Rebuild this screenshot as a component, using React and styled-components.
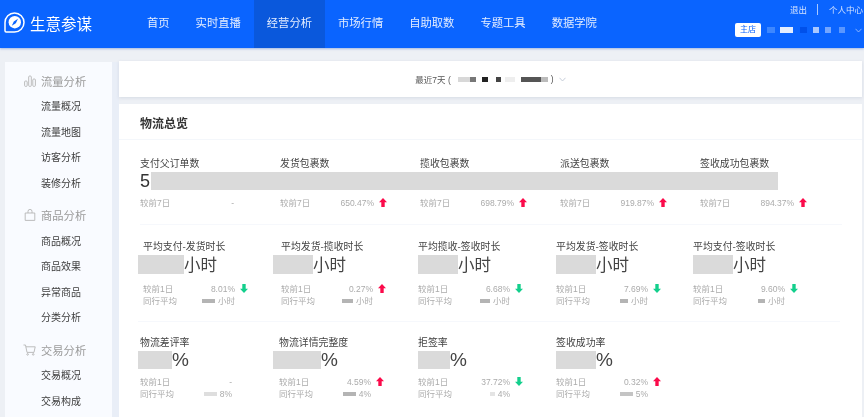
import React from "react";
import styled, { createGlobalStyle } from "styled-components";

const GlobalStyle = createGlobalStyle`
  html, body {
    margin: 0;
    padding: 0;
    height: 100%;
    overflow: hidden;
    background: #edf0f5;
    font-family: "Liberation Sans", "Noto Sans CJK SC", sans-serif;
  }
`;

const Page = styled.div`
  width: 864px;
  height: 417px;
  overflow: hidden;
  filter: blur(0.3px);
`;

const Header = styled.header`
  height: 48px;
  background: #0a64ff;
  display: flex;
  box-shadow: 0 1px 2px rgba(90, 130, 210, 0.5);
`;

const Brand = styled.div`
  width: 134px;
  display: flex;
  align-items: center;
  padding: 0 0 3px 4px;
  gap: 5px;
  box-sizing: border-box;
  color: #fff;
  font-size: 15.5px;
`;

const Nav = styled.nav`
  display: flex;
`;

const NavItem = styled.div`
  padding: 0 13px;
  line-height: 46px;
  font-size: 11.3px;
  color: #e4edff;
  background: ${(p) => (p.$active ? "#0a58dc" : "transparent")};
`;

const Account = styled.div`
  margin-left: auto;
  width: 129px;
  flex-shrink: 0;
  font-size: 8.5px;
  color: #d5e3ff;
`;

const AccountTop = styled.div`
  display: flex;
  align-items: center;
  height: 18px;
  padding-left: 55px;
  white-space: nowrap;
`;

const AccountSep = styled.span`
  width: 1px;
  height: 11px;
  background: #a9c8ff;
  margin: 0 11px 0 10px;
`;

const AccountBottom = styled.div`
  display: flex;
  align-items: center;
  height: 20px;
  margin-top: 2px;
`;

const ShopTag = styled.span`
  width: 26px;
  height: 14px;
  line-height: 14px;
  text-align: center;
  background: #fff;
  border-radius: 2px;
  color: #0a64ff;
  font-size: 8px;
  margin-right: 6px;
`;

const Smudge = styled.span`
  display: inline-block;
  flex-shrink: 0;
  width: ${(p) => p.$w}px;
  height: ${(p) => p.$h || 6}px;
  margin-left: ${(p) => p.$gap || 0}px;
  background: ${(p) => p.$color};
  filter: blur(0.7px);
`;

const Body = styled.div`
  display: flex;
  align-items: flex-start;
  padding: 14px 2px 0 5px;
`;

const Sidebar = styled.aside`
  width: 107px;
  height: 360px;
  flex-shrink: 0;
  box-sizing: border-box;
  padding-top: 5px;
  background: #f9fbff;
  box-shadow: 7px 0 0 #e9eef7;
`;

const SideGroup = styled.div`
  margin-bottom: 5.5px;
`;

const SideTitle = styled.div`
  height: 27px;
  display: flex;
  align-items: center;
  gap: 5px;
  padding-left: 19px;
  font-size: 11.3px;
  color: #9b9b9b;
`;

const SideItem = styled.div`
  height: 25.5px;
  line-height: 25.5px;
  padding-left: 36px;
  font-size: 10px;
  color: #3c3c3c;
`;

const Main = styled.main`
  margin-left: 7px;
  flex: 1;
  min-width: 0;
`;

const DateBar = styled.div`
  height: 36px;
  margin-top: -1px;
  background: #fff;
  box-shadow: 0 1px 3px rgba(150, 160, 180, 0.25);
  display: flex;
  align-items: center;
  justify-content: center;
  font-size: 8.5px;
  color: #555;
`;

const DateEnd = styled.span`
  display: flex;
  margin-left: ${(p) => p.$gap}px;
`;

const Card = styled.section`
  margin-top: 7px;
  background: #fff;
  height: 320px;
`;

const CardTitle = styled.h2`
  margin: 0;
  height: 36px;
  line-height: 40px;
  padding-left: 21px;
  font-size: 12px;
  font-weight: 700;
  color: #333;
  border-bottom: 1px solid #f4f7fb;
  box-sizing: border-box;
`;

const Rows = styled.div`
  padding-left: 19px;
`;

const MetricRow = styled.div`
  display: grid;
  grid-template-columns: ${(p) => p.$cols};
  width: 702px;
  padding-top: ${(p) => p.$top}px;
  padding-bottom: ${(p) => p.$bottom}px;
  border-bottom: ${(p) => (p.$last ? "none" : "1px solid #f6f8fc")};
  margin-left: ${(p) => p.$shift || 0}px;
`;

const Cell = styled.div`
  min-width: 0;
`;

const MetricName = styled.div`
  height: 14px;
  line-height: 14px;
  padding-left: ${(p) => p.$indent || 0}px;
  font-size: 9.9px;
  color: #444;
  white-space: nowrap;
`;

const ValueLine = styled.div`
  display: flex;
  align-items: center;
  height: ${(p) => p.$h}px;
  margin: 1px 0 ${(p) => p.$after}px;
  white-space: nowrap;
`;

const Digit = styled.span`
  font-size: 18px;
  line-height: 18px;
  color: #333;
  padding-right: 1px;
`;

const Masked = styled.span`
  display: block;
  flex-shrink: 0;
  width: ${(p) => p.$w}px;
  height: 100%;
  background: #dadada;
`;

const Unit = styled.span`
  font-size: ${(p) => p.$size}px;
  line-height: 18px;
  color: #444;
`;

const Compare = styled.div`
  display: grid;
  grid-template-columns: ${(p) => p.$valueEnd}px 13px;
  height: 12px;
  line-height: 12px;
  padding-left: ${(p) => p.$indent || 0}px;
  font-size: 8.5px;
  color: #ababab;
`;

const CompareValue = styled.div`
  display: flex;
  align-items: center;
  justify-content: space-between;
  white-space: nowrap;
`;

const CompareRight = styled.span`
  display: flex;
  align-items: center;
  color: #ababab;
`;

const PeerUnit = styled.span`
  margin-left: 3px;
`;

const TrendIcon = styled.svg`
  width: 8px;
  height: 9px;
  margin: 1px 0 0 4.5px;
  fill: ${(p) => (p.$up ? "#fb0a4a" : "#13cf8c")};
`;

const LogoMark = () => (
  <svg width="21" height="21" viewBox="0 0 21 21" fill="none">
    <path d="M1 10.5a9.5 9.5 0 1 1 9.5 9.5H2.2A1.2 1.2 0 0 1 1 18.8z" stroke="#fff" strokeWidth="1.5" />
    <circle cx="10.8" cy="10.2" r="6.2" fill="#fff" />
    <path d="M14 6.8 11.8 11.2 7.8 13.8 9.8 9.4z" fill="#0a64ff" />
  </svg>
);

const BarsIcon = () => (
  <svg width="12" height="12" viewBox="0 0 12 12" fill="none" stroke="#b5b5b5" strokeWidth="0.9">
    <rect x="0.6" y="6" width="2.6" height="5.4" rx="1" />
    <rect x="4.7" y="1" width="2.6" height="10.4" rx="1" />
    <rect x="8.8" y="4" width="2.6" height="7.4" rx="1" />
  </svg>
);

const BagIcon = () => (
  <svg width="12" height="12" viewBox="0 0 12 12" fill="none" stroke="#b5b5b5" strokeWidth="0.9">
    <path d="M1.2 4h9.6v7.4H1.2z" />
    <path d="M4 4V2.4a2 2 0 0 1 4 0V4" />
  </svg>
);

const CartIcon = () => (
  <svg width="13" height="12" viewBox="0 0 13 12" fill="none" stroke="#b5b5b5" strokeWidth="0.9" style={{ marginLeft: -1 }}>
    <path d="M0.5 1h2l1.5 7.4h7l1.2-5.6H2.9" />
    <circle cx="4.6" cy="10.4" r="0.8" />
    <circle cx="10.2" cy="10.4" r="0.8" />
  </svg>
);

const Chevron = ({ color }) => (
  <svg width="7" height="5" viewBox="0 0 7 5" fill="none" stroke={color} strokeWidth="0.8">
    <path d="M0.5 0.8 3.5 4l3-3.2" />
  </svg>
);

const Trend = ({ up }) => (
  <TrendIcon $up={up} viewBox="0 0 9 10">
    {up ? <path d="M4.5 0 9 4.6H6.4V10H2.6V4.6H0z" /> : <path d="M4.5 10 9 5.4H6.4V0H2.6v5.4H0z" />}
  </TrendIcon>
);

const sideGroups = [
  { title: "流量分析", icon: <BarsIcon />, items: ["流量概况", "流量地图", "访客分析", "装修分析"] },
  { title: "商品分析", icon: <BagIcon />, items: ["商品概况", "商品效果", "异常商品", "分类分析"] },
  { title: "交易分析", icon: <CartIcon />, items: ["交易概况", "交易构成"] },
];

const navItems = ["首页", "实时直播", "经营分析", "市场行情", "自助取数", "专题工具", "数据学院"];

const rowOne = [
  { name: "支付父订单数", digit: "5", w: 627, change: "-" },
  { name: "发货包裹数", change: "650.47%", up: true },
  { name: "揽收包裹数", change: "698.79%", up: true },
  { name: "派送包裹数", change: "919.87%", up: true },
  { name: "签收成功包裹数", change: "894.37%", up: true },
];

const rowTwo = [
  { name: "平均支付-发货时长", indent: 5, w: 46, change: "8.01%", up: false, peerW: 13 },
  { name: "平均发货-揽收时长", indent: 8, w: 40, change: "0.27%", up: true, peerW: 11 },
  { name: "平均揽收-签收时长", indent: 0, w: 40, change: "6.68%", up: false, peerW: 10 },
  { name: "平均发货-签收时长", indent: 0, w: 40, change: "7.69%", up: false, peerW: 8 },
  { name: "平均支付-签收时长", indent: 0, w: 40, change: "9.60%", up: false, peerW: 7 },
];

const rowThree = [
  { name: "物流差评率", indent: 2, w: 34, change: "-", peerW: 13, peerColor: "#dedede", peer: "8%" },
  { name: "物流详情完整度", indent: 6, w: 48, change: "4.59%", up: true, peerW: 13, peerColor: "#b4b4b4", peer: "4%" },
  { name: "拒签率", indent: 0, w: 32, change: "37.72%", up: false, peerW: 5, peerColor: "#e4e4e4", peer: "4%" },
  { name: "签收成功率", indent: 0, w: 40, change: "0.32%", up: true, peerW: 13, peerColor: "#c4c4c4", peer: "5%" },
];

const ChangeLine = ({ label, indent, change, up, valueEnd = 92 }) => (
  <Compare $indent={indent} $valueEnd={valueEnd}>
    <CompareValue>
      <span>{label}</span>
      <CompareRight>{change}</CompareRight>
    </CompareValue>
    {up !== undefined && <Trend up={up} />}
  </Compare>
);

const PeerLine = ({ indent, peerW, peerColor = "#b4b4b4", peer }) => (
  <Compare $indent={indent} $valueEnd={92}>
    <CompareValue>
      <span>同行平均</span>
      <CompareRight>
        <Smudge $w={peerW} $h={4} $color={peerColor} />
        <PeerUnit>{peer}</PeerUnit>
      </CompareRight>
    </CompareValue>
  </Compare>
);

export default function App() {
  return (
    <Page>
      <GlobalStyle />
      <Header>
        <Brand>
          <LogoMark />
          生意参谋
        </Brand>
        <Nav>
          {navItems.map((item) => (
            <NavItem key={item} $active={item === "经营分析"}>
              {item}
            </NavItem>
          ))}
        </Nav>
        <Account>
          <AccountTop>
            退出
            <AccountSep />
            个人中心
          </AccountTop>
          <AccountBottom>
            <ShopTag>主店</ShopTag>
            <Smudge $w={8} $color="#3d87ff" />
            <Smudge $w={13} $gap={5} $color="#e3edff" />
            <Smudge $w={7} $gap={7} $color="#0050ea" />
            <Smudge $w={6} $gap={6} $color="#a9c8ff" />
            <Smudge $w={6} $gap={6} $color="#74a6ff" />
            <Smudge $w={6} $gap={8} $color="#5a97ff" />
            <DateEnd $gap={10}>
              <Chevron color="#a9c8ff" />
            </DateEnd>
          </AccountBottom>
        </Account>
      </Header>
      <Body>
        <Sidebar>
          {sideGroups.map((group) => (
            <SideGroup key={group.title}>
              <SideTitle>
                {group.icon}
                {group.title}
              </SideTitle>
              {group.items.map((item) => (
                <SideItem key={item}>{item}</SideItem>
              ))}
            </SideGroup>
          ))}
        </Sidebar>
        <Main>
          <DateBar>
            最近7天 (
            <Smudge $w={12} $gap={7} $h={5} $color="#d8d8d8" />
            <Smudge $w={6} $h={5} $color="#777" />
            <Smudge $w={6} $gap={6} $h={5} $color="#222" />
            <Smudge $w={5} $gap={8} $h={5} $color="#444" />
            <Smudge $w={10} $gap={4} $h={5} $color="#eee" />
            <Smudge $w={20} $gap={6} $h={5} $color="#555" />
            <Smudge $w={7} $h={5} $color="#bbb" />
            <DateEnd $gap={3}>)</DateEnd>
            <DateEnd $gap={5}>
              <Chevron color="#b9c2d0" />
            </DateEnd>
          </DateBar>
          <Card>
            <CardTitle>物流总览</CardTitle>
            <Rows>
              <MetricRow $cols="repeat(5, 140px)" $top={17} $bottom={15} $shift={2}>
                {rowOne.map((m) => (
                  <Cell key={m.name}>
                    <MetricName>{m.name}</MetricName>
                    <ValueLine $h={18} $after={7}>
                      {m.digit && <Digit>{m.digit}</Digit>}
                      {m.w && <Masked $w={m.w} />}
                    </ValueLine>
                    <ChangeLine label="较前7日" change={m.change} up={m.up} valueEnd={94} />
                  </Cell>
                ))}
              </MetricRow>
              <MetricRow $cols="135px 145px 138px 137px 137px" $top={15} $bottom={14}>
                {rowTwo.map((m) => (
                  <Cell key={m.name}>
                    <MetricName $indent={m.indent}>{m.name}</MetricName>
                    <ValueLine $h={19} $after={9}>
                      <Masked $w={m.w} />
                      <Unit $size={16.5}>小时</Unit>
                    </ValueLine>
                    <ChangeLine label="较前1日" indent={m.indent} change={m.change} up={m.up} />
                    <PeerLine indent={m.indent} peerW={m.peerW} peer="小时" />
                  </Cell>
                ))}
              </MetricRow>
              <MetricRow $cols="135px 145px 138px 137px" $top={14} $bottom={0} $last>
                {rowThree.map((m) => (
                  <Cell key={m.name}>
                    <MetricName $indent={m.indent}>{m.name}</MetricName>
                    <ValueLine $h={18} $after={7}>
                      <Masked $w={m.w} />
                      <Unit $size={19}>%</Unit>
                    </ValueLine>
                    <ChangeLine label="较前1日" indent={m.indent} change={m.change} up={m.up} />
                    <PeerLine indent={m.indent} peerW={m.peerW} peerColor={m.peerColor} peer={m.peer} />
                  </Cell>
                ))}
              </MetricRow>
            </Rows>
          </Card>
        </Main>
      </Body>
    </Page>
  );
}
